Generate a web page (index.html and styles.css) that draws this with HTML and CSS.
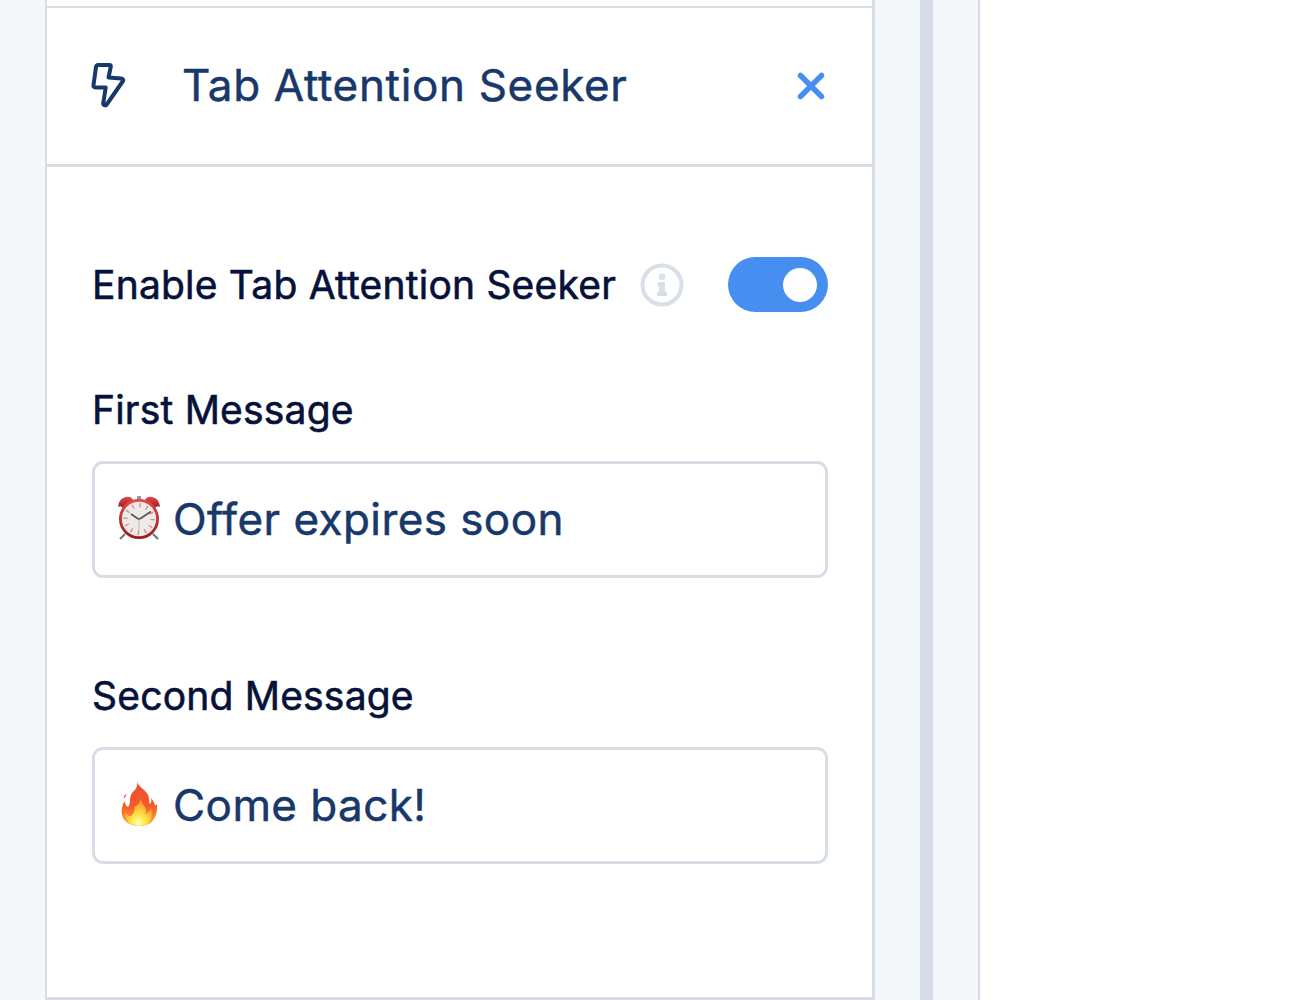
FILE: index.html
```html
<!DOCTYPE html>
<html lang="en">
<head>
    <meta charset="UTF-8">
    <meta name="viewport" content="width=device-width, initial-scale=1.0">
    <title>Tab Attention Seeker</title>
    <link rel="stylesheet" href="styles.css">
</head>
<body>
    <div class="sidebar">
        <div class="previous-panel"></div>
        <div class="panel">
            <div class="panel-header">
                <svg class="bolt" width="38" height="48" viewBox="0 0 38 48">
                    <path d="M8 4H19.500Q21 4 20.800 5.500L18.500 16.500L31 17.500Q34 18 33 20L17 43Q16 45 14 44Q13 43.500 13.300 42L15.700 26.500H5.500Q3 26.500 3.500 24L6 6Q6.400 4 8 4Z" fill="none" stroke="#183869" stroke-width="4" stroke-linejoin="round"/>
                </svg>
                <h2>Tab Attention Seeker</h2>
                <svg class="close" width="28" height="30" viewBox="0 0 28 30">
                    <path d="M3.500 4.500L24.500 25.500M24.500 4.500L3.500 25.500" stroke="#468ff0" stroke-width="5.500" stroke-linecap="round"/>
                </svg>
            </div>

            <div class="panel-body">
                <div class="enable-row">
                    <span class="label enable-label">Enable Tab Attention Seeker</span>
                    <svg class="info" width="44" height="44" viewBox="0 0 44 44">
                        <circle cx="22" cy="22" r="19.500" fill="none" stroke="#d8dfe6" stroke-width="4"/>
                        <circle cx="22" cy="13.700" r="3.300" fill="#d8dfe6"/>
                        <path d="M18 19.500H24.500V29H26.500V32.500H17.500V29H19.500V23H18Z" fill="#d8dfe6" stroke="#d8dfe6" stroke-linejoin="round"/>
                    </svg>
                    <div class="toggle"><div class="knob"></div></div>
                </div>

                <div class="field">
                    <div class="label">First Message</div>
                    <div class="input">
                        <svg class="emoji" width="44" height="46" viewBox="0 0 44 46">
                            <defs>
                                <linearGradient id="red" x2="0" y2="1">
                                    <stop offset="0" stop-color="#e04a4a"/>
                                    <stop offset="1" stop-color="#9c1c20"/>
                                </linearGradient>
                            </defs>
                            <path d="M8 38L3 43M36 38L41 43" stroke="#777" stroke-width="2.200"/>
                            <path d="M20 0H24V5H20Z" fill="#999"/>
                            <path d="M1 11Q2 2 9 1Q14 0 16 4L6 12Q4 9 1 11ZM43 11Q42 2 35 1Q30 0 28 4L38 12Q40 9 43 11Z" fill="url(#red)"/>
                            <circle cx="22" cy="23" r="18.600" fill="#eeeae7" stroke="url(#red)" stroke-width="2.800"/>
                            <circle cx="22" cy="23" r="13.500" fill="none" stroke="#d98990" stroke-width="4.500" stroke-dasharray="1.300 5.769"/>
                            <path d="M14 18L22 23.500L34 15.500" fill="none" stroke="#555" stroke-width="1.700"/>
                            <path d="M22 23V37" stroke="#d7b29b"/>
                        </svg>
                        <span>Offer expires soon</span>
                    </div>
                </div>

                <div class="field">
                    <div class="label">Second Message</div>
                    <div class="input">
                        <svg class="emoji" width="44" height="46" viewBox="0 0 44 46">
                            <defs>
                                <linearGradient id="flame" x2="0" y2="1">
                                    <stop offset="0" stop-color="#ee4935"/>
                                    <stop offset="0.550" stop-color="#f55b2c"/>
                                    <stop offset="1" stop-color="#ffb12c"/>
                                </linearGradient>
                                <radialGradient id="glow" cx="0.500" cy="0.900" r="0.750">
                                    <stop offset="0" stop-color="#fffbc3"/>
                                    <stop offset="0.350" stop-color="#ffe746"/>
                                    <stop offset="1" stop-color="#ff902d"/>
                                </radialGradient>
                            </defs>
                            <path d="M20 0C22 6 32 9 32 17Q32 20 33 22Q35 20 34 16Q37 19 38 23Q39 24 40 22C41 35 35 44 23 44C10 44 3 36 5 26Q6 21 8 19Q8 24 11 25C14 22 12 18 14 13C16 8 21 8 20 0ZM7 17Q6 13 10 12Q8 15 7 17Z" fill="url(#flame)"/>
                            <path d="M24 14Q23 19 28 25Q30 29 28 32Q33 31 34 25Q38 43 23 44Q7 43 8 29Q10 35 14 34Q19 29 17 25Q24 22 24 14Z" fill="url(#glow)"/>
                        </svg>
                        <span>Come back!</span>
                    </div>
                </div>
            </div>
        </div>
    </div>
    <div class="divider"></div>
    <div class="gutter"></div>
    <div class="preview"></div>
</body>
</html>
```

FILE: styles.css
```css
* {
    box-sizing: border-box;
}

body {
    font-family: Inter, sans-serif;
    margin: 0;
    height: 1000px;
    display: flex;
    overflow: hidden;
    background-color: white;
}

.sidebar {
    width: 920px;
    height: 1000px;
    padding-left: 45px;
    background-color: #f4f8fa;
}

.previous-panel,
.panel {
    width: 830px;
    background-color: white;
    border: 0 solid #d6dde5;
    border-width: 0 3px 0 2px;
}

.previous-panel {
    height: 6px;
}

.panel {
    height: 994px;
    border-width: 2px 3px 3px 2px;
}

.panel-header {
    height: 159px;
    padding: 0 47px 0 43px;
    display: flex;
    align-items: center;
    border-bottom: 3px solid #d6dde5;
}

.panel-header h2 {
    margin: 0 auto 0 54px;
    padding-bottom: 2px;
    font-size: 44px;
    line-height: 52px;
    font-weight: 400;
    color: #183869;
    -webkit-text-stroke: 0.5px #183869;
    letter-spacing: 0.66px;
    white-space: nowrap;
}

.bolt {
    margin-bottom: 2px;
}

.panel-body {
    padding: 90px 44px 0 45px;
}

.enable-row {
    height: 55px;
    display: flex;
    align-items: center;
}

.label {
    font-size: 39px;
    line-height: 48px;
    font-weight: 400;
    color: #07123a;
    -webkit-text-stroke: 0.6px #07123a;
    letter-spacing: 0.2px;
    white-space: nowrap;
}

.enable-label {
    width: 548px;
}

.toggle {
    width: 100px;
    height: 55px;
    margin-left: 44px;
    padding-right: 11px;
    display: flex;
    flex-shrink: 0;
    align-items: center;
    justify-content: flex-end;
    border-radius: 28px;
    background-color: #468ff0;
}

.info {
    flex-shrink: 0;
}

.knob {
    width: 34px;
    height: 34px;
    border-radius: 50%;
    background-color: white;
}

.field {
    height: 212px;
    margin-top: 74px;
}

.input {
    width: 736px;
    height: 117px;
    margin-top: 27px;
    padding: 0 22px 2px;
    display: flex;
    align-items: center;
    gap: 12px;
    border: 3px solid #d6dde5;
    border-radius: 11px;
    font-size: 44px;
    line-height: 54px;
    font-weight: 400;
    color: #183869;
    -webkit-text-stroke: 0.5px #183869;
    letter-spacing: 0.43px;
    white-space: nowrap;
}

.emoji {
    flex-shrink: 0;
}

.divider {
    width: 13px;
    background-color: #d5dce7;
}

.gutter {
    width: 47px;
    background-color: #f4f8fa;
    border-right: 2px solid #d6dde5;
}

.preview {
    flex: 1;
    background-color: white;
}
```
